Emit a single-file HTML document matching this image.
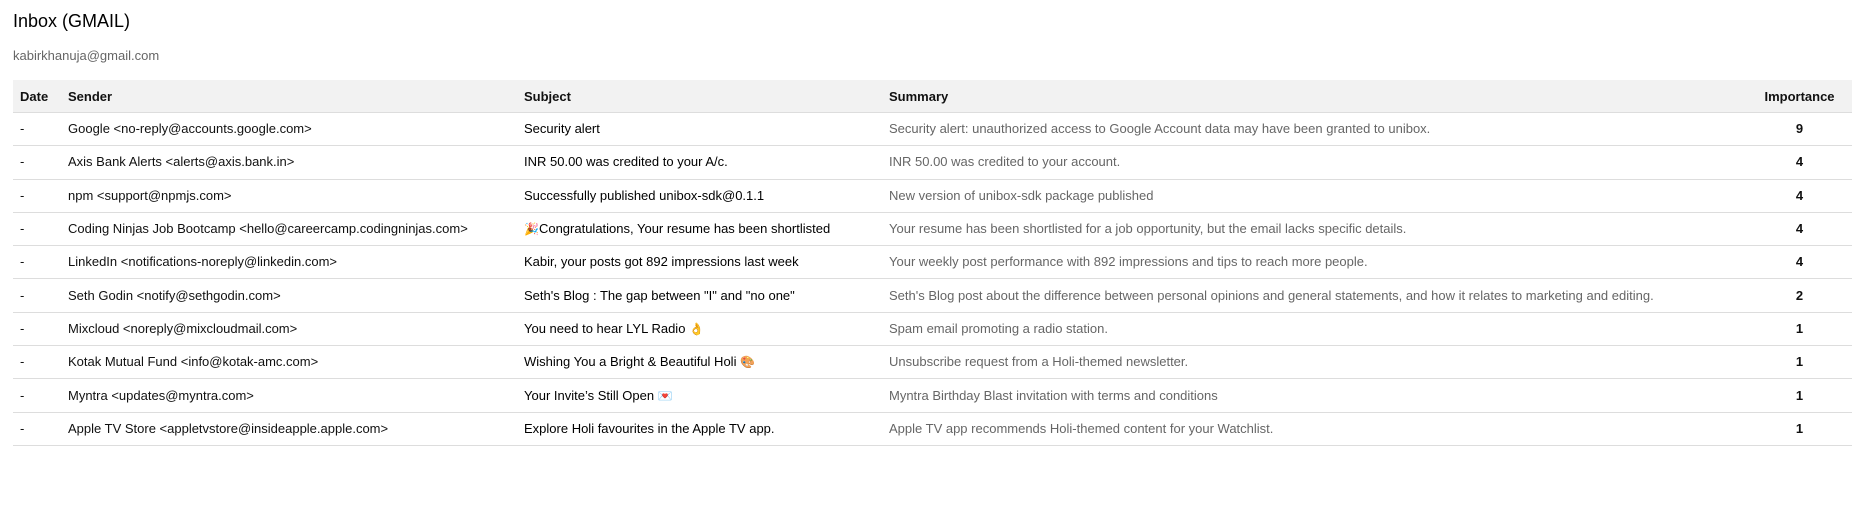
<!DOCTYPE html>
<html><head><meta charset="utf-8"><style>
body{margin:0;background:#fff;font-family:"Liberation Sans","Noto Sans CJK JP",sans-serif;color:#111;}
h1{position:absolute;left:13px;top:11px;margin:0;font-size:18px;font-weight:normal;color:#000;}
.email{position:absolute;left:13px;top:48px;font-size:13px;color:#666;}
table{position:absolute;left:13px;top:80px;width:1839px;border-collapse:collapse;font-size:13px;table-layout:fixed;}
th{background:#f2f2f2;height:32px;text-align:left;font-weight:bold;color:#111;padding:0;border-bottom:1px solid #ddd;}
td{height:32.3px;padding:0;border-bottom:1px solid #ddd;line-height:16px;}
th:first-child,td:first-child{padding-left:7px;}
.s{color:#000;}
.m{color:#666;}
.i{text-align:center;font-weight:bold;padding-right:12px;}
.e{font-size:12px;line-height:12px;}
</style></head><body>
<h1>Inbox (GMAIL)</h1>
<div class="email">kabirkhanuja@gmail.com</div>
<table>
<colgroup><col style="width:55px"><col style="width:456px"><col style="width:365px"><col style="width:870px"><col style="width:93px"></colgroup>
<tr><th>Date</th><th>Sender</th><th>Subject</th><th>Summary</th><th class="i">Importance</th></tr>
<tr><td>-</td><td>Google &lt;no-reply@accounts.google.com&gt;</td><td class="s">Security alert</td><td class="m">Security alert: unauthorized access to Google Account data may have been granted to unibox.</td><td class="i">9</td></tr>
<tr><td>-</td><td>Axis Bank Alerts &lt;alerts@axis.bank.in&gt;</td><td class="s">INR 50.00 was credited to your A/c.</td><td class="m">INR 50.00 was credited to your account.</td><td class="i">4</td></tr>
<tr><td>-</td><td>npm &lt;support@npmjs.com&gt;</td><td class="s">Successfully published unibox-sdk@0.1.1</td><td class="m">New version of unibox-sdk package published</td><td class="i">4</td></tr>
<tr><td>-</td><td>Coding Ninjas Job Bootcamp &lt;hello@careercamp.codingninjas.com&gt;</td><td class="s"><span class="e">🎉</span>Congratulations, Your resume has been shortlisted</td><td class="m">Your resume has been shortlisted for a job opportunity, but the email lacks specific details.</td><td class="i">4</td></tr>
<tr><td>-</td><td>LinkedIn &lt;notifications-noreply@linkedin.com&gt;</td><td class="s">Kabir, your posts got 892 impressions last week</td><td class="m">Your weekly post performance with 892 impressions and tips to reach more people.</td><td class="i">4</td></tr>
<tr><td>-</td><td>Seth Godin &lt;notify@sethgodin.com&gt;</td><td class="s">Seth's Blog : The gap between "I" and "no one"</td><td class="m">Seth's Blog post about the difference between personal opinions and general statements, and how it relates to marketing and editing.</td><td class="i">2</td></tr>
<tr><td>-</td><td>Mixcloud &lt;noreply@mixcloudmail.com&gt;</td><td class="s">You need to hear LYL Radio <span class="e">👌</span></td><td class="m">Spam email promoting a radio station.</td><td class="i">1</td></tr>
<tr><td>-</td><td>Kotak Mutual Fund &lt;info@kotak-amc.com&gt;</td><td class="s">Wishing You a Bright &amp; Beautiful Holi <span class="e">🎨</span></td><td class="m">Unsubscribe request from a Holi-themed newsletter.</td><td class="i">1</td></tr>
<tr><td>-</td><td>Myntra &lt;updates@myntra.com&gt;</td><td class="s">Your Invite’s Still Open <span class="e">💌</span></td><td class="m">Myntra Birthday Blast invitation with terms and conditions</td><td class="i">1</td></tr>
<tr><td>-</td><td>Apple TV Store &lt;appletvstore@insideapple.apple.com&gt;</td><td class="s">Explore Holi favourites in the Apple TV app.</td><td class="m">Apple TV app recommends Holi-themed content for your Watchlist.</td><td class="i">1</td></tr>
</table>
</body></html>
